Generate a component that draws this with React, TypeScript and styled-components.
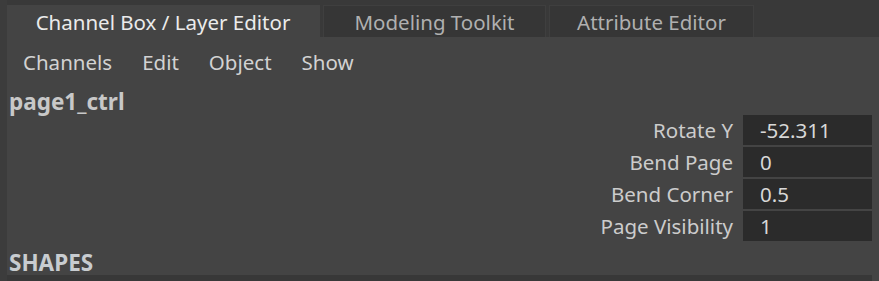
import React from "react";
import styled, { createGlobalStyle } from "styled-components";

const GlobalStyle = createGlobalStyle`
  html, body {
    margin: 0;
    background: #444444;
    font-family: "Noto Sans", "Open Sans", sans-serif;
  }
`;

const Frame = styled.div`
  display: flex;
  flex-direction: column;
  width: 879px;
  height: 281px;
  overflow: hidden;
  background: #444444;
  border-left: 7px solid #3c3c3c;
  box-sizing: border-box;
`;

const TabBar = styled.div`
  display: flex;
  align-items: flex-end;
  gap: 3px;
  height: 38px;
  margin-left: -7px;
  padding-left: 6px;
  background: #393939;
`;

const Tab = styled.div<{ $active?: boolean; $width: number }>`
  display: flex;
  align-items: center;
  justify-content: center;
  width: ${(p) => p.$width}px;
  height: 32px;
  padding-top: 1px;
  box-sizing: border-box;
  font-size: 20.5px;
  color: ${(p) => (p.$active ? "#ebebeb" : "#b0b0b0")};
  background: ${(p) => (p.$active ? "#444444" : "#363636")};
  border: 1px solid ${(p) => (p.$active ? "#444444" : "#3f3f3f")};
  border-bottom: none;
`;

const MenuBar = styled.div`
  display: flex;
  align-items: center;
  gap: 30px;
  height: 48px;
  padding-left: 16px;
  padding-top: 1px;
  box-sizing: border-box;
`;

const MenuItem = styled.span`
  font-size: 20.5px;
  color: #d2d2d2;
`;

const ObjectName = styled.div`
  height: 31px;
  padding-top: 5px;
  box-sizing: border-box;
  display: flex;
  align-items: center;
  padding-left: 2px;
  font-size: 22.5px;
  line-height: 1;
  font-weight: 700;
  color: #c8c8c8;
`;

const AttrList = styled.div`
  display: flex;
  flex-direction: column;
  gap: 2px;
  padding-right: 7px;
`;

const AttrRow = styled.div`
  display: flex;
  justify-content: flex-end;
  align-items: center;
  gap: 10px;
  height: 30px;
`;

const AttrLabel = styled.span`
  font-size: 20.5px;
  color: #cccccc;
`;

const AttrField = styled.div`
  display: flex;
  align-items: center;
  width: 129px;
  height: 30px;
  box-sizing: border-box;
  padding-left: 17px;
  background: #2b2b2b;
  font-size: 20.5px;
  color: #d8d8d8;
`;

const SectionTitle = styled.div`
  margin-top: 10px;
  height: 24px;
  display: flex;
  align-items: center;
  padding-left: 2px;
  font-size: 22.5px;
  line-height: 1;
  font-weight: 700;
  color: #c8ccd0;
`;

const SectionRule = styled.div`
  height: 6px;
  margin-right: 7px;
  background: #383838;
`;

const attrs = [
  { label: "Rotate Y", value: "-52.311" },
  { label: "Bend Page", value: "0" },
  { label: "Bend Corner", value: "0.5" },
  { label: "Page Visibility", value: "1" },
];

export default function App() {
  return (
    <>
      <GlobalStyle />
      <Frame>
        <TabBar>
          <Tab $active $width={314}>Channel Box / Layer Editor</Tab>
          <Tab $width={223}>Modeling Toolkit</Tab>
          <Tab $width={205}>Attribute Editor</Tab>
        </TabBar>
        <MenuBar>
          <MenuItem>Channels</MenuItem>
          <MenuItem>Edit</MenuItem>
          <MenuItem>Object</MenuItem>
          <MenuItem>Show</MenuItem>
        </MenuBar>
        <ObjectName>page1_ctrl</ObjectName>
        <AttrList>
          {attrs.map((a) => (
            <AttrRow key={a.label}>
              <AttrLabel>{a.label}</AttrLabel>
              <AttrField>{a.value}</AttrField>
            </AttrRow>
          ))}
        </AttrList>
        <SectionTitle>SHAPES</SectionTitle>
        <SectionRule />
      </Frame>
    </>
  );
}
